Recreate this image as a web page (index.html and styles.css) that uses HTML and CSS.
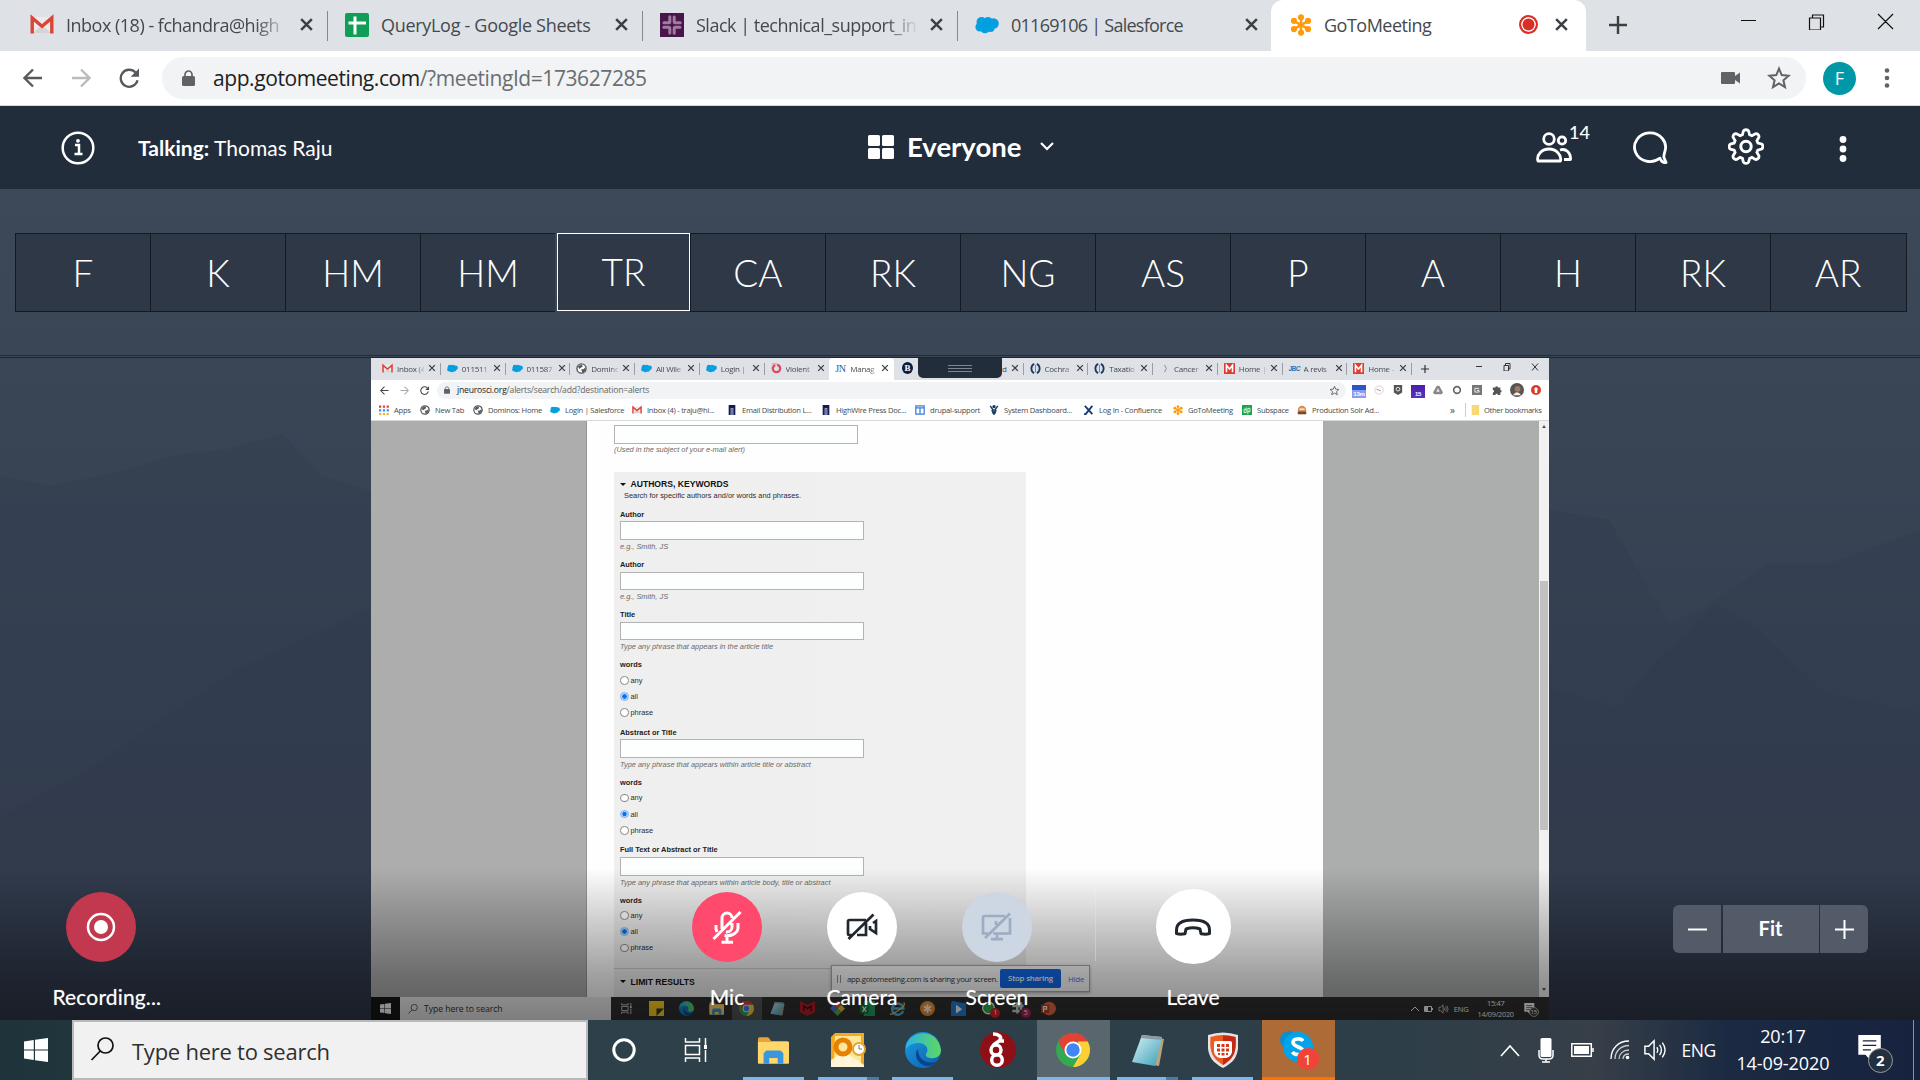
FILE: index.html
```html
<!DOCTYPE html>
<html lang="en">
<head>
<meta charset="utf-8">
<title>GoToMeeting</title>
<link rel="stylesheet" href="styles.css">
</head>
<body>
<svg class="defs" width="0" height="0">
  <defs>
    <linearGradient id="edgeA" x1="0" y1="0" x2="1" y2="1"><stop offset="0" stop-color="#1b9de2"/><stop offset="1" stop-color="#0b5cad"/></linearGradient>
    <linearGradient id="edgeB" x1="0" y1="0" x2="1" y2="0"><stop offset="0" stop-color="#29b3e6"/><stop offset="1" stop-color="#5fd85c"/></linearGradient>
    <linearGradient id="note" x1="0" y1="0" x2="1" y2="1"><stop offset="0" stop-color="#d8f3f8"/><stop offset="1" stop-color="#3b9fb5"/></linearGradient>
    <symbol id="x" viewBox="0 0 14 14"><path d="M2 2l10 10M12 2L2 12" stroke="#3c4043" stroke-width="2.300" fill="none"/></symbol>
    <symbol id="gmail" viewBox="0 0 24 18"><path d="M2 1h20v16H2z" fill="#eceaea"/><path d="M3 17l9-8 9 8z" fill="#d5d3d3"/><path d="M2.200 17.500V2L12 10.200 21.800 2v15.500" stroke="#db4437" stroke-width="3.400" fill="none"/></symbol>
    <symbol id="sheets" viewBox="0 0 24 24"><rect width="24" height="24" rx="2" fill="#109d58"/><path d="M10 3.500v18M3.500 10h17.500" stroke="#fff" stroke-width="3"/></symbol>
    <symbol id="slack" viewBox="0 0 24 24"><rect width="24" height="24" fill="#4a154b"/><g stroke="#a07ba1" stroke-width="3" stroke-linecap="round"><path d="M9.800 3.800v5.500M14.200 14.700v5.500M3.800 14.200h5.500M14.700 9.800h5.500M14.200 4v5.300M9.800 14.700V20M4 9.800h5.300M14.700 14.200H20"/></g></symbol>
    <symbol id="sf" viewBox="0 0 24 17"><g fill="#049fe0"><circle cx="6.500" cy="5.500" r="5"/><circle cx="13" cy="5" r="4.500"/><circle cx="18.500" cy="7" r="5.300"/><circle cx="5" cy="10.500" r="4.600"/><circle cx="10" cy="12" r="4.800"/><circle cx="15.500" cy="11.500" r="4"/></g></symbol>
    <symbol id="gtm" viewBox="0 0 24 24"><g stroke="#ff9a0c" fill="#ff9a0c" stroke-width="2.800"><path d="M12 3v18M4 7.500l16 9M20 7.500l-16 9"/><g stroke="none"><circle cx="12" cy="3.600" r="3.300"/><circle cx="12" cy="20.400" r="3.300"/><circle cx="4.300" cy="7.500" r="3.300"/><circle cx="19.700" cy="7.500" r="3.300"/><circle cx="4.300" cy="16.500" r="3.300"/><circle cx="19.700" cy="16.500" r="3.300"/></g></g></symbol>
    <symbol id="back" viewBox="0 0 20 20"><path d="M19 10H2M10 1.500L1.500 10l8.500 8.500" stroke="currentColor" stroke-width="2.300" fill="none"/></symbol>
    <symbol id="fwd" viewBox="0 0 20 20"><path d="M1 10h17M10 1.500l8.500 8.500-8.500 8.500" stroke="currentColor" stroke-width="2.300" fill="none"/></symbol>
    <symbol id="reload" viewBox="0 0 20 20"><path d="M18.500 12.200A8.500 8.500 0 1 1 16.500 4.500" stroke="currentColor" stroke-width="2.300" fill="none"/><path d="M20 .5v8.300h-8.300z" fill="currentColor"/></symbol>
    <symbol id="lock" viewBox="0 0 13 16"><rect y="6" width="13" height="10" rx="1.500" fill="#5f6368"/><path d="M3 7V4.500a3.500 3.500 0 0 1 7 0V7" fill="none" stroke="#5f6368" stroke-width="1.700"/></symbol>
    <symbol id="star" viewBox="0 0 24 24"><path d="M12 2.600l2.700 6.500 7 .6-5.300 4.600 1.600 6.900-6-3.700-6 3.700 1.600-6.900-5.300-4.600 7-.6z" fill="none" stroke="#5f6368" stroke-width="2"/></symbol>
    <symbol id="win" viewBox="0 0 24 24"><path d="M0 3.400L9.800 2v9.400H0zM11 1.800L24 0v11.400H11zM0 12.600h9.800V22L0 20.600zM11 12.600h13V24l-13-1.800z" fill="currentColor"/></symbol>
    <symbol id="glass" viewBox="0 0 24 24"><circle cx="15" cy="8.500" r="7.500" fill="none" stroke="currentColor" stroke-width="1.700"/><path d="M9.800 14L1 23" stroke="currentColor" stroke-width="1.700"/></symbol>
    <symbol id="taskview" viewBox="0 0 24 24"><path d="M1.500 0v4h14V0M1.500 24v-4h14v4M1.500 7.500h14v9h-14zM21.500 0v8M21.500 12v12" fill="none" stroke="currentColor" stroke-width="1.500"/><path d="M20 7h3v4h-3z" fill="currentColor"/></symbol>
    <symbol id="globe" viewBox="0 0 12 12"><circle cx="6" cy="6" r="5" fill="#fff" stroke="#55595d" stroke-width="1.500"/><path d="M2 3.500l4-2 1.500 2L5 5.500 3.500 6.500zM5.500 7l3-.5 1.500-2 .5 3L8 10.500l-1 .3L6.500 9z" fill="#55595d"/></symbol>
    <symbol id="pillar" viewBox="0 0 12 12"><path d="M2 0h8v12H7.500V3.500h-3V12H2z" fill="#141b58"/><path d="M5 4h2v8H5z" fill="#5a5f8c"/></symbol>
    <symbol id="ring" viewBox="0 0 12 12"><path d="M4.500 1C.5 3 .5 9 4.500 11M7.500 1c4 2 4 8 0 10" stroke="#1c3867" stroke-width="2" fill="none"/><path d="M6 2v8" stroke="#c33" stroke-width=".8"/></symbol>
    <symbol id="mred" viewBox="0 0 12 12"><rect width="12" height="12" fill="#e03a31"/><path d="M2.700 10V2.500L6 6.500l3.300-4V10" stroke="#fff" stroke-width="1.800" fill="none"/></symbol>
    <symbol id="folder" viewBox="0 0 34 28"><path d="M1 2a2 2 0 0 1 2-2h9l3 4h17a2 2 0 0 1 2 2v20H1z" fill="#e8a33a"/><path d="M1 5h33v22a1 1 0 0 1-1 1H2a1 1 0 0 1-1-1z" fill="#ffd76b"/><path d="M7 28V17l3-3h15l3 3v11h-6v-6h-9v6z" fill="#3a97dd"/></symbol>
    <symbol id="edge" viewBox="0 0 36 36"><circle cx="18" cy="18" r="18" fill="url(#edgeA)"/><path d="M1 14C4-1 32-6 36 18c0 6-5 9-11 8-3-.5-5-2-4-4 4-6-1-11-8-11-5 0-9 2-12 6z" fill="url(#edgeB)"/><path d="M13 17c-5 6 0 16 9 17 4 .5 8-2 10-5-8 4-19 0-19-12z" fill="#0c448c"/></symbol>
    <symbol id="chrome" viewBox="0 0 34 34"><circle cx="17" cy="17" r="17" fill="#34a853"/><path d="M2.300 8.500A17 17 0 0 1 31.700 8.500H17z" fill="#e34133"/><path d="M2.300 8.500L9.600 21.300 17 8.500z" fill="#e34133"/><path d="M31.700 8.500A17 17 0 0 1 17 34l7.400-12.800L22 8.500z" fill="#fdd035"/><circle cx="17" cy="17" r="8.500" fill="#fff"/><circle cx="17" cy="17" r="6.700" fill="#4285f4"/></symbol>
    <symbol id="notepad" viewBox="0 0 34 34"><path d="M12 3l21 3-5 27-6-1z" fill="#b9a57c"/><path d="M11 2l20 2-7 29-23-4z" fill="url(#note)"/><path d="M11 2l20 2-.8 3-20.500-2z" fill="#8d9aa0"/></symbol>
    <symbol id="shield" viewBox="0 0 30 36"><path d="M0 3q15-5 30 0c1 17 0 25-15 33C0 28-1 20 0 3z" fill="#e4e4e4"/><path d="M2.500 5q12.500-4 25 0c1 14-1 21-12.500 28C3.500 26 1.500 19 2.500 5z" fill="#ed5a24"/><path d="M15 3.500q7 0 12.500 1.500c1 14-1 21-12.500 28z" fill="#c22a14"/><path d="M8 9h14q2 0 2 2v9q-1 5-6 6h-6q-5-1-6-6v-9q0-2 2-2z" fill="#fff"/><path d="M9 12h3v3H9zM13.500 12h3v3h-3zM18 12h3v3h-3zM9 16.500h3v3H9zM13.500 16.500h3v3h-3zM18 16.500h3v3h-3zM10 21h2v2h-2zM13.500 21h3v2.500h-3zM18 21h2v2h-2z" fill="#d03a1a"/></symbol>
    <symbol id="excel" viewBox="0 0 12 12"><rect x="3" width="9" height="12" fill="#23a566"/><rect y="3" width="7" height="7" fill="#107c41"/><path d="M2 4.500l3 4M5 4.500l-3 4" stroke="#fff"/></symbol>
    <symbol id="spk" viewBox="0 0 24 24"><path d="M1 8h4l6-6v20l-6-6H1z" fill="none" stroke="currentColor" stroke-width="1.600"/><path d="M14 9q2 3 0 6M17 6.500q4 5.500 0 11M20 4q6 8 0 16" fill="none" stroke="currentColor" stroke-width="1.500"/></symbol>
    <symbol id="chat" viewBox="0 0 26 30"><path d="M0 0h25v22H14v7l-6-7H0z" fill="currentColor"/><path d="M5 6.500h15M5 11.500h15M5 16.500h9" stroke="#17233c" stroke-width="1.600"/></symbol>
  </defs>
</svg>

<div class="tabs">
  <div class="tab"><svg class="fav"><use href="#gmail"/></svg><span class="tt fade">Inbox (18) - fchandra@high</span><svg class="cx"><use href="#x"/></svg></div>
  <div class="tab"><svg class="fav"><use href="#sheets"/></svg><span class="tt wide">QueryLog - Google Sheets</span><svg class="cx"><use href="#x"/></svg></div>
  <div class="tab"><svg class="fav"><use href="#slack"/></svg><span class="tt fade">Slack | technical_support_in</span><svg class="cx"><use href="#x"/></svg></div>
  <div class="tab last"><svg class="fav"><use href="#sf"/></svg><span class="tt tight">01169106 | Salesforce</span><svg class="cx"><use href="#x"/></svg></div>
  <div class="tab active"><svg class="fav"><use href="#gtm"/></svg><span class="tt">GoToMeeting</span><i class="rec"></i><svg class="cx"><use href="#x"/></svg></div>
  <svg class="plus" viewBox="0 0 18 18"><path d="M9 0v18M0 9h18" stroke="#3c4043" stroke-width="2.400"/></svg>
  <svg class="winctl" viewBox="0 0 154 18"><g fill="none" stroke="#111" stroke-width="1.200"><path d="M1 8.500h15M69.500 6h11v12h-11zM72.500 6V3h11v12h-3M138 2l15 15M153 2l-15 15"/></g></svg>
</div>
<div class="toolbar">
  <svg class="nav"><use href="#back"/></svg><svg class="nav dim"><use href="#fwd"/></svg><svg class="nav rl"><use href="#reload"/></svg>
  <div class="pill"><svg class="lk"><use href="#lock"/></svg><span class="url">app.gotomeeting.com<b>/?meetingId=173627285</b></span>
    <svg class="cam" viewBox="0 0 19 12"><path d="M0 1a1 1 0 0 1 1-1h12a1 1 0 0 1 1 1v3l5-3.500v11L14 8v3a1 1 0 0 1-1 1H1a1 1 0 0 1-1-1z" fill="#5f6368"/></svg>
    <svg class="st"><use href="#star"/></svg></div>
  <div class="ava">F</div>
  <svg class="dots" viewBox="0 0 6 20"><g fill="#5f6368"><circle cx="3" cy="2.500" r="2.300"/><circle cx="3" cy="10" r="2.300"/><circle cx="3" cy="17.500" r="2.300"/></g></svg>
</div>

<header class="head">
  <svg class="info" viewBox="0 0 34 34"><circle cx="17" cy="17" r="15.300" fill="none" stroke="#fff" stroke-width="2.500"/><path d="M14 14h4v9M13.500 23h8" stroke="#fff" stroke-width="2.500" fill="none"/><circle cx="17" cy="9.800" r="1.900" fill="#fff"/></svg>
  <div class="talk"><strong>Talking:</strong> Thomas Raju</div>
  <div class="view"><svg width="26" height="24" viewBox="0 0 26 24"><g fill="#fff"><rect width="12" height="11" rx="1.500"/><rect x="14" width="12" height="11" rx="1.500"/><rect y="13" width="12" height="11" rx="1.500"/><rect x="14" y="13" width="12" height="11" rx="1.500"/></g></svg><span>Everyone</span><svg width="14" height="9" viewBox="0 0 14 9"><path d="M1 1l6 6 6-6" fill="none" stroke="#fff" stroke-width="2.200"/></svg></div>
  <div class="acts">
    <svg width="36" height="31" viewBox="0 0 36 31"><g fill="none" stroke="#fff" stroke-width="2.800"><circle cx="13" cy="7" r="5.300"/><circle cx="26" cy="8.500" r="3.700"/><path d="M2 29c-2-6 4-12 11-12s13 6 11.500 12zM24 18c6-2 11 3 10.500 9.500H28" stroke-linejoin="round"/></g></svg><span class="count">14</span>
    <svg width="36" height="33" viewBox="0 0 36 33"><path d="M28 27.200A15.500 14.300 0 1 1 33 20c-.7 3-1.500 5-1 6.500l2 5c-3 .3-5-1.500-6-4.300z" fill="none" stroke="#fff" stroke-width="2.800" stroke-linejoin="round"/></svg>
    <svg class="gear" width="36" height="37" viewBox="0 0 36 36"><path d="M15.400 2.500c1-1.700 4.200-1.700 5.200 0l1 3.800 2.300 1 3.500-2c2-.5 4 1.500 3.500 3.500l-2 3.400 1 2.300 3.700 1c1.700 1 1.700 4 0 5l-3.800 1.100-.9 2.300 2 3.500c.5 2-1.500 4-3.500 3.500l-3.500-2-2.300 1-1 3.700c-1 1.700-4.200 1.700-5.200 0l-1-3.800-2.300-.9-3.500 2c-2 .5-4-1.500-3.500-3.500l2-3.500-.9-2.300-3.800-1c-1.700-1-1.700-4 0-5l3.800-1.100.9-2.300-2-3.400c-.5-2 1.500-4 3.500-3.500l3.500 2 2.300-1z" fill="none" stroke="#fff" stroke-width="2.800"/><circle cx="18" cy="18" r="5.200" fill="none" stroke="#fff" stroke-width="3"/></svg>
    <svg class="more" width="8" height="26" viewBox="0 0 8 26"><g fill="#fff"><circle cx="4" cy="3.500" r="3.400"/><circle cx="4" cy="13" r="3.400"/><circle cx="4" cy="22.500" r="3.400"/></g></svg>
  </div>
</header>

<section class="people">
  <div>F</div><div>K</div><div>HM</div><div>HM</div><div class="on">TR</div><div>CA</div><div>RK</div><div>NG</div><div>AS</div><div>P</div><div>A</div><div>H</div><div>RK</div><div>AR</div>
</section>

<main class="stage">
  <svg class="hills" viewBox="0 0 1920 662" preserveAspectRatio="none"><path d="M0 118L50 128l60-12 70-20 45-4 57-16 40 42 50 16V662H0zM1549 152l60 10 60 104 40-20 60-40 60 0 91-34V662H1549z" fill="#313c4e" opacity=".35"/><path d="M0 460l90-50 150-100 131-60V662H0zM1549 330l70 20 40-50 55-55 50 30 60 60 96 20V662H1549z" fill="#2f384a" opacity=".25"/></svg>
  <div class="video">
    <div class="vtabs">
      <div><svg><use href="#gmail"/></svg><span>Inbox (4</span><svg class="vx"><use href="#x"/></svg></div>
      <div><svg><use href="#sf"/></svg><span>011511</span><svg class="vx"><use href="#x"/></svg></div>
      <div><svg><use href="#sf"/></svg><span>011587</span><svg class="vx"><use href="#x"/></svg></div>
      <div><svg><use href="#globe"/></svg><span>Domino</span><svg class="vx"><use href="#x"/></svg></div>
      <div><svg><use href="#sf"/></svg><span>All Wile</span><svg class="vx"><use href="#x"/></svg></div>
      <div><svg><use href="#sf"/></svg><span>Login | </span><svg class="vx"><use href="#x"/></svg></div>
      <div class="nb"><svg viewBox="0 0 12 12"><circle cx="6" cy="6" r="4" fill="none" stroke="#d84c62" stroke-width="2.500" stroke-dasharray="17 2"/><path d="M1 1h6" stroke="#e79aa6" stroke-width="1.500"/></svg><span>Violent</span><svg class="vx"><use href="#x"/></svg></div>
      <div class="cur"><em>JN</em><span>Manag</span><svg class="vx"><use href="#x"/></svg></div>
      <div class="nb"><u>B</u></div>
      <div><svg></svg><span class="d">d</span><svg class="vx"><use href="#x"/></svg></div>
      <div><svg><use href="#ring"/></svg><span>Cochra</span><svg class="vx"><use href="#x"/></svg></div>
      <div><svg><use href="#ring"/></svg><span>Taxatio</span><svg class="vx"><use href="#x"/></svg></div>
      <div><svg viewBox="0 0 12 12"><path d="M6 2l2 4-2 4" stroke="#888" fill="none"/></svg><span>Cancer</span><svg class="vx"><use href="#x"/></svg></div>
      <div><svg><use href="#mred"/></svg><span>Home |</span><svg class="vx"><use href="#x"/></svg></div>
      <div><em class="jbc">JBC</em><span>A revis</span><svg class="vx"><use href="#x"/></svg></div>
      <div><svg><use href="#mred"/></svg><span>Home -</span><svg class="vx"><use href="#x"/></svg></div>
      <svg class="vplus" viewBox="0 0 8 8"><path d="M4 0v8M0 4h8" stroke="#333" stroke-width="1.200"/></svg>
      <svg class="vwin" viewBox="0 0 64 8"><path d="M1 3.500h6M29 2.500h4.500V8H29zM30.500 2V.5H35V6h-1M57 .5l6 7M63 .5l-6 7" fill="none" stroke="#333"/></svg>
    </div>
    <div class="vbar">
      <svg class="vn"><use href="#back"/></svg><svg class="vn dim"><use href="#fwd"/></svg><svg class="vn"><use href="#reload"/></svg>
      <div class="vpill"><svg width="6" height="8"><use href="#lock"/></svg><span>jneurosci.org<b>/alerts/search/add?destination=alerts</b></span><svg class="vst"><use href="#star"/></svg></div>
      <div class="ext">
        <i class="e1">13m</i>
        <svg viewBox="0 0 12 12"><circle cx="6" cy="6" r="5" fill="#fff" stroke="#ccc"/><path d="M3 5l5 2" stroke="#b66"/></svg>
        <svg viewBox="0 0 12 12"><path d="M1 0h10v9l-5 3-5-3z" fill="#555"/><circle cx="6" cy="5" r="2.200" fill="none" stroke="#fff"/></svg>
        <i class="e2">15</i>
        <svg viewBox="0 0 12 12"><path d="M4.500 1h3L12 9l-1.500 2h-9L0 9z" fill="#888"/><path d="M6 4l2 4H4z" fill="#eee"/></svg>
        <svg viewBox="0 0 12 12"><circle cx="6" cy="6" r="4" fill="none" stroke="#666" stroke-width="2"/></svg>
        <svg viewBox="0 0 12 12"><rect x="0" y="0" width="12" height="12" fill="#777"/><path d="M8.500 4h-5v4.500h5V6.500H6" stroke="#fff" fill="none"/></svg>
        <svg viewBox="0 0 12 12"><path d="M1 3h3a1.500 1.500 0 1 1 3 0h3v3a1.500 1.500 0 1 1 0 3v3H7a1.500 1.500 0 0 0-3 0H1V9a1.500 1.500 0 0 0 0-3z" fill="#555"/></svg>
        <svg class="big" viewBox="0 0 12 12"><circle cx="6" cy="6" r="6" fill="#5b5552"/><circle cx="6.500" cy="5" r="2.500" fill="#a07b68"/><path d="M2.500 10.500q3.500-5 7 0" fill="#eee"/></svg>
        <svg viewBox="0 0 12 12"><circle cx="6" cy="6" r="6" fill="#dc3a24"/><path d="M6 2.500l3 3H7.500v4h-3v-4H3z" fill="#fff"/></svg>
      </div>
    </div>
    <div class="marks">
      <div style="width:41px"><svg viewBox="0 0 12 12"><g stroke-width="2.600" stroke-dasharray="2.600 2"><path d="M0 2h12" stroke="#e34133"/><path d="M0 6.500h12" stroke="#4285f4"/><path d="M0 11h12" stroke="#efb02e"/></g></svg>Apps</div>
      <div style="width:53px"><svg><use href="#globe"/></svg>New Tab</div>
      <div style="width:77px"><svg><use href="#globe"/></svg>Dominos: Home</div>
      <div style="width:82px"><svg><use href="#sf"/></svg>Login | Salesforce</div>
      <div style="width:95px"><svg><use href="#gmail"/></svg>Inbox (4) - traju@hi...</div>
      <div style="width:94px"><svg><use href="#pillar"/></svg>Email Distribution L...</div>
      <div style="width:94px"><svg><use href="#pillar"/></svg>HighWire Press Doc...</div>
      <div style="width:74px"><svg viewBox="0 0 12 12"><path d="M1 1h10v10H1zM1 3.500h10M6 3v8" fill="none" stroke="#3b7ddb" stroke-width="1.500"/></svg>drupal-support</div>
      <div style="width:95px"><svg viewBox="0 0 12 12"><circle cx="6" cy="2" r="2" fill="#173b66"/><path d="M1.500 1l3 4.500L6 6l1.500-.5 3-4.500M6 5v7M3.500 6L5 10h2l1.500-4" fill="none" stroke="#173b66" stroke-width="1.700"/></svg>System Dashboard...</div>
      <div style="width:89px"><svg viewBox="0 0 12 12"><path d="M1 1l9 10M10 1L2 11H0" fill="none" stroke="#153b73" stroke-width="2.200"/></svg>Log In - Confluence</div>
      <div style="width:69px"><svg><use href="#gtm"/></svg>GoToMeeting</div>
      <div style="width:55px"><svg viewBox="0 0 12 12"><rect width="12" height="12" fill="#1ea54c"/><path d="M5 3v6H2.500V5H5M7 11V4h2.500v4H7" fill="none" stroke="#fff"/></svg>Subspace</div>
      <div style="width:153px"><svg viewBox="0 0 12 12"><path d="M1 6a5 5 0 0 1 10 0v5H1z" fill="#d98d4e"/><path d="M1 8h10v3H1z" fill="#6d4a36"/><path d="M3 5h6" stroke="#fff" stroke-width="1.500"/></svg>Production Solr Ad...</div>
      <div class="raq">»</div>
      <div class="ob"><svg viewBox="0 0 12 12"><path d="M2 0h9v12H2z" fill="#f8d775"/></svg>Other bookmarks</div>
    </div>
    <div class="page">
      <div class="gutter"></div>
      <div class="sheet">
        <div class="inp top"></div><div class="hint first">(Used in the subject of your e-mail alert)</div>
        <div class="panel">
          <div class="ptitle">AUTHORS, KEYWORDS</div>
          <div class="pdesc">Search for specific authors and/or words and phrases.</div>
          <div class="field"><label>Author</label><div class="inp"></div><div class="hint">e.g., Smith, JS</div></div>
          <div class="field"><label>Author</label><div class="inp"></div><div class="hint">e.g., Smith, JS</div></div>
          <div class="field"><label>Title</label><div class="inp"></div><div class="hint">Type any phrase that appears in the article title</div></div>
          <div class="radios"><label>words</label><p><i></i>any</p><p><i class="c"></i>all</p><p><i></i>phrase</p></div>
          <div class="field"><label>Abstract or Title</label><div class="inp"></div><div class="hint">Type any phrase that appears within article title or abstract</div></div>
          <div class="radios"><label>words</label><p><i></i>any</p><p><i class="c"></i>all</p><p><i></i>phrase</p></div>
          <div class="field"><label>Full Text or Abstract or Title</label><div class="inp"></div><div class="hint">Type any phrase that appears within article body, title or abstract</div></div>
          <div class="radios"><label>words</label><p><i></i>any</p><p><i class="c"></i>all</p><p><i></i>phrase</p></div>
          <div class="ptitle limit">LIMIT RESULTS</div>
        </div>
      </div>
      <div class="gutter r"></div>
      <div class="scroll"><i class="up"></i><div class="thumb"></div><i class="dn"></i></div>
    </div>
    <div class="vtask">
      <div class="vstart"><svg width="11" height="11"><use href="#win"/></svg></div>
      <div class="vsearch"><svg width="10" height="10"><use href="#glass"/></svg>Type here to search</div>
      <div class="vicons">
        <span><svg class="w"><use href="#taskview"/></svg></span>
        <span><svg viewBox="0 0 12 12"><path d="M0 0h12v12H0z" fill="#ffd21f"/><path d="M6 12V6h6z" fill="#333"/></svg></span>
        <span><svg><use href="#edge"/></svg></span><span><svg><use href="#folder"/></svg></span>
        <span class="lit"><svg><use href="#chrome"/></svg></span><span><svg><use href="#notepad"/></svg></span>
        <span><svg viewBox="0 0 12 12"><path d="M0 0l6 3 6-3v9l-6 3-6-3z" fill="#b3202c"/><path d="M3 8V4l3 2 3-2v4" stroke="#400" fill="none"/></svg></span>
        <span><svg viewBox="0 0 12 12"><path d="M6 0l3 3-3 3-3-3z" fill="#e05a45"/><path d="M9 3l3 3-3 3-3-3z" fill="#e8c23d"/><path d="M3 3l3 3-3 3-3-3z" fill="#5577c9"/><path d="M6 6l3 3-3 3-3-3z" fill="#5cab52"/></svg></span>
        <span><svg><use href="#excel"/></svg></span>
        <span><svg viewBox="0 0 12 12"><path d="M10.500 8A4.500 4.500 0 1 1 10.700 6H3" fill="none" stroke="#45b5ec" stroke-width="2"/><path d="M1 10Q-1 12 6 8T11 1" fill="none" stroke="#f5c538"/></svg></span>
        <span><svg viewBox="0 0 24 24"><circle cx="12" cy="12" r="12" fill="#f2932e"/><path d="M12 5v14M6 8.500l12 7M18 8.500l-12 7" stroke="#fff" stroke-width="3"/></svg></span>
        <span><svg viewBox="0 0 12 12"><path d="M1 0l11 2v10H0V2z" fill="#2182d8"/><path d="M4 3l5 3.500L4 10z" fill="#fff"/></svg></span>
        <span><svg viewBox="0 0 12 12"><circle cx="6" cy="5.500" r="4.700" fill="#2fb14c" stroke="#fff"/></svg><q>1</q></span>
        <span><svg viewBox="0 0 12 12"><path d="M5 1v9M1 4h9M8 1v6M1 8h6" stroke="#c8d5d8" stroke-width="2"/></svg><q class="pk">5</q></span>
        <span><svg viewBox="0 0 12 12"><circle cx="6.500" cy="6" r="5.500" fill="#e66b45"/><rect y="3" width="6.500" height="6.500" fill="#c43e1c"/><path d="M2 9V4.500h2.500v2H2" stroke="#fff" fill="none"/></svg></span>
      </div>
      <div class="vtray"><svg width="8" height="6" viewBox="0 0 8 6"><path d="M0 5l4-4 4 4" stroke="#fff" fill="none"/></svg><svg width="9" height="6" viewBox="0 0 9 6"><path d="M.5.5h7v5h-7zM8.500 2v2" stroke="#fff" fill="none"/><path d="M1 1h3v4H1z" fill="#fff"/></svg><svg width="11" height="10"><use href="#spk"/></svg><span>ENG</span><div>15:47<br>14/09/2020</div><div class="vc"><svg width="11" height="12"><use href="#chat"/></svg><q>15</q></div></div>
    </div>
    <div class="share"><i></i><span>app.gotomeeting.com is sharing your screen.</span><b>Stop sharing</b><a>Hide</a></div>
    <div class="drawer"><svg width="24" height="7" viewBox="0 0 24 7"><path d="M0 .5h24M0 3.500h24M0 6.500h24" stroke="#7c8795"/></svg></div>
  </div>
  <div class="overlay">
    <div class="ctl record"><div class="disc"><svg width="30" height="30" viewBox="0 0 30 30"><circle cx="15" cy="15" r="13" fill="none" stroke="#fff" stroke-width="2.500"/><circle cx="15" cy="15" r="7" fill="#fff"/></svg></div><span>Recording...</span></div>
    <div class="ctl mic"><div class="disc"><svg width="30" height="34" viewBox="0 0 30 34"><g fill="none" stroke="#fff" stroke-width="3"><path d="M10 19V8a5 5 0 0 1 10 0M20 13v4a5 5 0 0 1-5 5l-1-.2M4 15v4l1 3M26 13v5a11 8 0 0 1-13.500 7.500M15 26v6M9.500 32.300h11.500M1.500 29L28.500 2"/></g></svg></div><span>Mic</span></div>
    <div class="ctl camr"><div class="disc"><svg width="32" height="28" viewBox="0 0 32 28"><g fill="none" stroke="#21272f" stroke-width="2.700"><path d="M20 7H3.500a1.500 1.500 0 0 0-1.500 1.500V21a1 1 0 0 0 1 1h3M11 22h9V10M24 13v3l6 4V8l-3 2M2.500 26L27.500 1.500"/></g></svg></div><span>Camera</span></div>
    <div class="ctl scr"><div class="disc"><svg width="32" height="30" viewBox="0 0 32 30"><g fill="none" stroke="#9dacc2" stroke-width="2.700"><path d="M24 4H4a2 2 0 0 0-2 2v15.500h5M29 6v15.500H12M16 22v4M10 27.200h12M4 26L29 1.500M15 9v4"/></g></svg></div><span>Screen</span></div>
    <div class="sep"></div>
    <div class="ctl leave"><div class="disc"><svg width="38" height="20" viewBox="0 0 38 20"><path d="M2.500 13c0-7 6-10 16.500-10s16.500 3 16.500 10v3.500c-3 1-5.500.8-8.500.2L26 12c-4-1.500-10-1.500-14 0l-1 4.700c-3 .6-5.500.8-8.500-.2z" fill="none" stroke="#21272f" stroke-width="3" stroke-linejoin="round"/></svg></div><span>Leave</span></div>
    <div class="zoom"><div><svg width="19" height="19" viewBox="0 0 19 19"><path d="M0 9.500h19" stroke="#fff" stroke-width="2"/></svg></div><div class="fit">Fit</div><div><svg width="19" height="19" viewBox="0 0 19 19"><path d="M0 9.500h19M9.500 0v19" stroke="#fff" stroke-width="2"/></svg></div></div>
  </div>
</main>

<footer class="task">
  <div class="start"><svg width="24" height="24"><use href="#win"/></svg></div>
  <div class="search"><svg width="25" height="24"><use href="#glass"/></svg>Type here to search</div>
  <div class="cell"><svg width="24" height="24" viewBox="0 0 24 24"><circle cx="12" cy="12" r="10.200" fill="none" stroke="#fff" stroke-width="3"/></svg></div>
  <div class="cell"><svg class="tv" width="24" height="24"><use href="#taskview"/></svg></div>
  <div class="cell run"><svg class="fold" width="32" height="27"><use href="#folder"/></svg></div>
  <div class="cell run two"><svg width="35" height="34" viewBox="0 0 35 34"><path d="M4 0h29v34H0V4z" fill="#f8a81c"/><path d="M4 3h26v28H3z" fill="#ffe79a"/><path d="M0 27l14-8 19 13v2H0z" fill="#fff6d8"/><circle cx="12" cy="14" r="7" fill="none" stroke="#e58000" stroke-width="5"/><circle cx="28" cy="16" r="6" fill="#fff" stroke="#e8a330" stroke-width="2"/><path d="M28 12v4h3" stroke="#777" fill="none"/></svg></div>
  <div class="cell run"><svg width="36" height="36"><use href="#edge"/></svg></div>
  <div class="cell"><svg width="36" height="36" viewBox="0 0 36 36"><circle cx="18" cy="18" r="18" fill="#8e1016"/><g fill="none" stroke="#fff" stroke-width="3.500"><circle cx="16" cy="18" r="5"/><circle cx="17" cy="28" r="5.300"/><path d="M13 2c6 0 9 3 7 6s-6 3-7 6M18 9h6"/></g></svg></div>
  <div class="cell run full"><svg width="34" height="34"><use href="#chrome"/></svg></div>
  <div class="cell run two"><svg width="34" height="34"><use href="#notepad"/></svg></div>
  <div class="cell run"><svg width="30" height="36"><use href="#shield"/></svg></div>
  <div class="cell sky"><svg width="38" height="38" viewBox="0 0 38 38"><circle cx="10" cy="10" r="9" fill="#0a8fd0"/><circle cx="19" cy="17" r="15" fill="#00a4ea"/><path d="M24 11c-2-3-10-3-10 1.500S24 17 24 21s-8 5-10.500 1" fill="none" stroke="#fff" stroke-width="3.600"/></svg><q>1</q></div>
  <div class="tray">
    <svg width="20" height="13" viewBox="0 0 20 13"><path d="M1 12l9-10 9 10" stroke="#fff" stroke-width="1.600" fill="none"/></svg>
    <svg class="t1" width="16" height="25" viewBox="0 0 16 25"><rect x="2.500" width="11" height="19" rx="1.500" fill="#fff"/><path d="M1 12v5q0 4 4 4h6q4 0 4-4v-5M8 21v3M4 24h8" stroke="#fff" fill="none" stroke-width="1.500"/></svg>
    <svg class="t2" width="23" height="14" viewBox="0 0 23 14"><path d="M.8.800h19.500v12.400H.8zM22 5v4" stroke="#fff" stroke-width="1.500" fill="none"/><path d="M3 3h15v8H3z" fill="#fff"/></svg>
    <svg class="t3" width="20" height="20" viewBox="0 0 20 20"><g fill="none" stroke="#fff" stroke-width="1.300"><path d="M1 19C1 9 8 1 19 1"/><path d="M5 19C5 11 11 5.500 19 5.500M9 19c0-5 4-9 10-9M13 19c0-3 2-5 6-5" opacity=".75"/></g><circle cx="17.500" cy="17.500" r="1.800" fill="#fff"/></svg>
    <svg class="t4" width="24" height="22"><use href="#spk"/></svg>
    <span class="eng">ENG</span>
    <div class="clock">20:17<br>14-09-2020</div>
    <div class="notif"><svg width="26" height="27"><use href="#chat"/></svg><q>2</q></div>
    <i class="peek"></i>
  </div>
</footer>
</body>
</html>
```
FILE: styles.css
```css
* { box-sizing: border-box; }
body { margin: 0; width: 1920px; height: 1080px; overflow: hidden; display: flex; flex-direction: column; font-family: "Open Sans", "Noto Sans", sans-serif; background: #3a4657; }
svg { flex: none; display: block; }
.defs { position: absolute; }
q { quotes: none; }
q::before, q::after { content: none; }

/* browser tabs */
.tabs { height: 51px; background: #dee1e6; display: flex; padding-left: 13px; }
.tab { width: 315px; height: 51px; display: flex; align-items: center; padding: 0 16px 2px 17px; position: relative; flex: none; }
.tab::after { content: ""; position: absolute; right: 0; top: 11px; height: 30px; width: 1.500px; background: #85898e; }
.tab.last::after, .tab.active::after { display: none; }
.fav { width: 24px; height: 24px; margin-right: 12px; }
.tt { width: 223px; font-size: 18px; letter-spacing: -0.5px; color: #45494d; white-space: nowrap; flex: none; }
.tt.wide { letter-spacing: -0.3px; }
.tt.tight { letter-spacing: -0.75px; }
.fade { -webkit-mask-image: linear-gradient(90deg, #000 85%, transparent 100%); mask-image: linear-gradient(90deg, #000 85%, transparent 100%); }
.cx { width: 15px; height: 15px; margin-left: 9.500px; }
.tab.active { background: #fff; border-radius: 12px 12px 0 0; margin-left: -2px; width: 315px; }
.tab.active .fav { margin-left: 2px; width: 22px; height: 22px; }
.tab.active .tt { width: 195px; }
.rec { width: 19px; height: 19px; border-radius: 50%; border: 2px solid #d93025; background: #d93025; box-shadow: inset 0 0 0 1.500px #fff; margin-right: 6px; flex: none; }
.plus { width: 18px; height: 18px; margin: 16px 0 0 23px; }
.winctl { width: 154px; height: 18px; margin: 12px 0 0 113px; }

/* address bar */
.toolbar { height: 55px; background: #fff; border-bottom: 1.500px solid #d4d7db; display: flex; align-items: center; padding-left: 23px; color: #55595e; }
.nav { width: 20px; height: 20px; margin-right: 28px; }
.nav.rl { margin-right: 23px; width: 20px; }
.dim { color: #b9bbbe; }
.pill { width: 1644px; height: 42px; border-radius: 21px; background: #f1f3f4; display: flex; align-items: center; padding-left: 20px; flex: none; }
.lk { width: 13px; height: 16px; margin-right: 18px; }
.url { font-size: 21px; letter-spacing: -0.42px; color: #202124; width: 1508px; }
.url b { font-weight: 400; color: #6a6e72; }
.cam { width: 19px; height: 12px; margin-right: 27px; }
.st { width: 24px; height: 24px; }
.ava { width: 33px; height: 33px; border-radius: 50%; background: #0097a7; color: #fff; font-size: 18px; display: grid; place-items: center; margin: 0 28px 0 17px; }
.dots { width: 6px; height: 20px; }

/* meeting header */
.head { height: 83px; background: #222d3c; display: flex; align-items: center; padding-left: 61px; color: #fff; font-family: Lato, sans-serif; }
.info { width: 34px; height: 34px; margin-right: 43px; }
.talk { width: 730px; font-size: 21px; letter-spacing: 0.02px; }
.view { width: 668px; display: flex; align-items: center; font-weight: 700; font-size: 27.500px; margin-top: -2px; }
.view span { margin: 0 19px 0 13px; }
.acts { display: flex; align-items: center; }
.count { font-size: 18px; font-weight: 500; margin: -31px 42px 0 -3px; width: 21px; }
.gear { margin-left: 60px; margin-top: -2px; }
.more { margin-left: 75px; margin-top: 2px; }

/* participant strip */
.people { height: 169px; padding: 44px 0 0 15px; display: flex; font-family: Lato, sans-serif; font-weight: 300; font-size: 37px; color: #fff; background: linear-gradient(#3d4859, #3a4556); border-bottom: 1.500px solid #1d2531; position: relative; }
.people::after { content: ""; position: absolute; left: 0; right: 0; bottom: 1px; height: 1px; background: #1d2531; opacity: .8; }
.people div { width: 135px; flex: none; height: 79px; padding-bottom: 1px; display: grid; place-items: center; background: #2f3847; border: 1px solid #141a24; border-left-width: 1.500px; border-right-width: 0; }
.people div:last-child { width: 137px; padding-right: 1px; border-right-width: 1px; }
.people div.on { border: 1.500px solid #fff; margin: 0 0 0 2px; width: 133px; height: 78px; }

/* stage */
.stage { height: 662px; position: relative; background: linear-gradient(#3a4556, #354052 45%, #323a4b); display: flex; padding-left: 371px; flex: none; }
.hills { position: absolute; inset: 0; width: 1920px; height: 662px; }
.video { width: 1178px; height: 662px; position: relative; background: #fff; display: flex; flex-direction: column; font-size: 8px; letter-spacing: -0.25px; color: #45494e; }
.vtabs { height: 21.500px; background: #dee1e6; display: flex; padding-left: 5px; align-items: center; flex: none; }
.vtabs > div { width: 64.750px; height: 21.500px; display: flex; align-items: center; padding: 0 0 1px 6px; position: relative; flex: none; }
.vtabs > div::after { content: ""; position: absolute; right: 0; top: 5px; height: 12px; width: 1px; background: #9a9ea3; }
.vtabs > div.nb::after, .vtabs > div.cur::after { display: none; }
.vtabs > div.cur { background: #fff; border-radius: 4px 4px 0 0; }
.vtabs > div svg { width: 11px; height: 11px; }
.vtabs span { width: 27px; margin: 0 4px 0 4px; white-space: nowrap; -webkit-mask-image: linear-gradient(90deg, #000 70%, rgba(0,0,0,.2)); mask-image: linear-gradient(90deg, #000 70%, rgba(0,0,0,.2)); }
.vtabs span.d { text-align: right; -webkit-mask-image: none; mask-image: none; }
.vtabs > div svg.vx { width: 8px; height: 8px; }
.vtabs em { font: 10px "Liberation Serif", serif; color: #1f5a95; width: 11px; letter-spacing: -0.5px; }
.vtabs em.jbc { font: italic bold 6.500px "Liberation Sans", sans-serif; color: #2376b9; }
.vtabs u { width: 11px; height: 12px; border-radius: 50%; background: #0b1d3f; color: #fff; font: bold 9px/12px "Liberation Serif", serif; text-align: center; text-decoration: none; margin-left: 2px; }
.vtabs .vplus { width: 8px; height: 8px; margin-left: 9px; }
.vwin { width: 64px; height: 8px; margin-left: 46px; margin-top: -3px; }
.vbar { height: 21px; display: flex; align-items: center; padding-left: 9px; flex: none; color: #444; }
.vn { width: 9px; height: 9px; margin-right: 11px; }
.vbar .dim { color: #aaa; }
.vpill { width: 909px; height: 17px; border-radius: 9px; background: #f1f3f4; display: flex; align-items: center; padding-left: 7px; margin-left: -3px; font-size: 8.600px; letter-spacing: -0.2px; color: #222; flex: none; }
.vpill span { margin-left: 7px; width: 872px; }
.vpill b { font-weight: 400; color: #666; }
.vst { width: 11px; height: 11px; }
.ext { display: flex; align-items: center; margin-left: 8px; }
.ext > * { width: 10px; height: 10px; margin-right: 9.700px; flex: none; }
.ext .big { width: 14px; height: 14px; margin: 0 7.700px 0 -2px; }
.ext i { font: bold 6px/7px "Liberation Sans", sans-serif; color: #fff; text-align: center; background: linear-gradient(#2a56c6 40%, #8b9cf0 40%); width: 14px; height: 13px; padding-top: 6px; margin: 3px 7.700px 0 -2px; }
.ext i.e2 { background: linear-gradient(#4c1fa8, #5b2fc0); }
.marks { height: 20.500px; display: flex; align-items: center; padding: 0 0 1px 8px; font-size: 7.600px; letter-spacing: -0.25px; white-space: nowrap; border-bottom: 1px solid #d7dadd; flex: none; }
.marks > div { display: flex; align-items: center; flex: none; }
.marks svg { width: 10px; height: 10px; margin-right: 5px; }
.marks .raq { font-size: 10px; width: 16px; border-right: 1px solid #ccc; margin-right: 4px; }
.marks .ob { letter-spacing: -0.32px; }
.marks .ob svg { margin-right: 4px; }
.page { height: 576px; display: flex; flex: none; font-family: "Liberation Sans", sans-serif; font-size: 7.400px; letter-spacing: 0; }
.gutter { width: 216px; background: #adadad; border-right: 1.500px solid #949494; }
.gutter.r { border: 0; background: #acaeae; }
.sheet { width: 736px; padding: 4px 0 0 27px; background: #fefefe; }
.inp { width: 244px; height: 18.500px; background: #fdfefe; border: 1px solid #b3b3b3; }
.hint { font-style: italic; color: #6a6a6a; height: 13px; line-height: 13px; white-space: nowrap; }
.first { height: 28px; line-height: 12px; }
.panel { width: 412px; height: 525px; background: linear-gradient(90deg, #efefef, #f0f0f0); padding: 6px 0 0 6px; color: #2c2c2c; }
.ptitle { font-weight: 700; font-size: 8.600px; line-height: 12px; color: #111; padding-left: 10.500px; position: relative; }
.ptitle::before { content: ""; position: absolute; left: 0; top: 5px; border: 3px solid transparent; border-top-color: #111; }
.pdesc { padding-left: 4px; height: 18px; line-height: 12px; }
.field { height: 50.300px; }
label { display: block; font-weight: 700; color: #222; height: 13.800px; line-height: 13px; }
.radios { height: 67.300px; }
.radios p { margin: 0; height: 16.200px; display: flex; align-items: center; gap: 2px; }
.radios i { width: 8.500px; height: 8.500px; border-radius: 50%; border: 1px solid #888; background: #fff; }
.radios i.c { border-color: #8ab9f0; background: radial-gradient(circle, #0872f0 40%, #a9d2fb 50%); }
.limit { margin: 7px 0 0 -6px; padding: 7px 0 0 16.500px; border-top: 1px solid #ccc; }
.limit::before { left: 6px; top: 11px; }
.scroll { width: 10px; background: #f1f1f1; display: flex; flex-direction: column; align-items: center; }
.up, .dn { border: 2px solid transparent; border-bottom: 3px solid #555; margin-top: 2px; }
.dn { border-bottom: 2px solid transparent; border-top: 3px solid #555; margin-top: 158px; }
.thumb { width: 8px; height: 249px; background: #c1c1c1; margin-top: 153px; }
.vtask { height: 23px; background: #2f2f2f; display: flex; align-items: center; flex: none; color: #fff; }
.vstart { width: 29px; height: 23px; background: #171717; display: grid; place-items: center; }
.vsearch { width: 211px; height: 23px; background: #f0f0f0; color: #333; display: flex; align-items: center; gap: 6px; padding-left: 8px; font-size: 8.600px; letter-spacing: -0.03px; }
.vicons { display: flex; }
.vicons span { width: 30.200px; height: 23px; display: grid; place-items: center; position: relative; }
.vicons .lit { background: #555; }
.vicons svg { width: 15px; height: 15px; }
.vicons svg.w { width: 11px; height: 11px; }
.vicons q { position: absolute; right: 3px; bottom: 2px; width: 10px; height: 10px; border-radius: 50%; background: #e8222a; font: 7px/10px "Open Sans", sans-serif; text-align: center; }
.vicons q.pk { background: #c21c5b; }
.vtray { margin-left: 347px; display: flex; align-items: center; gap: 5px; font-size: 7.600px; }
.vtray div { text-align: center; line-height: 11px; font-size: 7.300px; margin: 0 5px 0 4px; }
.vtray .vc { position: relative; margin: 0; }
.vtray q { position: absolute; left: 5px; top: 4px; width: 10px; height: 10px; border-radius: 50%; background: #444; border: .5px solid #aaa; font-size: 6px; line-height: 9px; }
.share { position: absolute; left: 460px; top: 607px; width: 259px; height: 27px; background: #fff; border: 1px solid #aaa; display: flex; align-items: center; font-size: 7.800px; letter-spacing: -0.18px; white-space: nowrap; color: #333; box-shadow: 0 1px 3px rgba(0,0,0,.3); }
.share > * { flex: none; }
.share i { width: 4px; height: 8px; border: solid #999; border-width: 0 1px; margin: 0 6px 0 5px; }
.share span { width: 153px; letter-spacing: -0.29px; }
.share b { width: 61px; height: 19px; background: #1268e8; color: #fff; border-radius: 2px; text-align: center; line-height: 18px; font-weight: 600; }
.share a { color: #3b78dc; margin-left: 7px; }
.drawer { position: absolute; left: 547px; top: 0; width: 84px; height: 20px; background: #222d3c; border-radius: 0 0 5px 5px; display: grid; place-items: center; }

/* call controls */
.overlay { position: absolute; left: 0; right: 0; bottom: 0; height: 160px; background: linear-gradient(rgba(0,0,0,0) 5%, rgba(0,0,0,.2) 40%, rgba(0,0,0,.37) 72%, rgba(0,0,0,.48)); display: flex; align-items: flex-start; padding: 32px 52px 0 41px; color: #fff; font: 21px Lato, sans-serif; }
.ctl { width: 135px; display: flex; flex-direction: column; align-items: center; }
.ctl span { margin-top: 20.500px; letter-spacing: 0.05px; line-height: 27px; text-shadow: 0 0 1px rgba(255,255,255,.5); }
.disc { width: 70px; height: 70px; border-radius: 50%; background: #fff; display: grid; place-items: center; }
.record { width: 130px; align-items: flex-start; }
.record .disc { background: #c2384f; margin-left: 25px; }
.record span { margin-left: 11.500px; letter-spacing: 0.15px; }
.mic { margin-left: 488.500px; }
.mic .disc { background: #ff4a6e; }
.scr .disc { background: #ccd7e3; }
.sep { width: 1.500px; height: 73px; background: linear-gradient(rgba(255,255,255,.1), rgba(255,255,255,.3)); margin: -4px 0 0 30px; }
.leave { margin: -3px 0 0 29.500px; }
.leave .disc { width: 75px; height: 75px; }
.leave span { margin-top: 18.500px; }
.zoom { display: flex; gap: 1.500px; margin: 13px 0 0 auto; height: 48px; }
.zoom div { width: 48px; background: #535b68; display: grid; place-items: center; border-radius: 6px 0 0 6px; }
.zoom div.fit { width: 96px; font-weight: 700; font-size: 20px; border-radius: 0; padding-bottom: 2px; }
.zoom div:last-child { border-radius: 0 6px 6px 0; }

/* taskbar */
.task { height: 60px; display: flex; color: #fff; background: linear-gradient(90deg, #1f343a 0, #2e414a 32%, #2d3e48 72%, #373f48 83%, #1b2a42 90%, #17223f 100%); flex: none; }
.start { width: 72px; display: grid; place-items: center; }
.search { width: 516px; background: #f1f1f1; border: 2px solid #b9babb; display: flex; align-items: center; gap: 17px; padding: 2px 0 0 16px; color: #2f2f2f; font-size: 22px; letter-spacing: -0.25px; }
.search svg { color: #111; margin-top: -5px; }
.cell { width: 73px; margin-right: 1.850px; display: grid; place-items: center; position: relative; flex: none; }
.cell svg { grid-area: 1/1; margin-left: -1px; }
.cell svg.tv { margin-left: -6px; }
.cell svg.fold { margin-left: -3px; }
.run::after { content: ""; position: absolute; left: 5px; right: 7px; bottom: 0; height: 3px; background: #76b9ed; }
.two::after { background: linear-gradient(90deg, #76b9ed 80%, #4a7ba2 80%); }
.full { background: #59666e; }
.full::after { left: 0; right: 0; }
.sky { background: #ad6b37; border-bottom: 3px solid #ff7200; }
.cell q { position: absolute; left: 35px; top: 28px; width: 22px; height: 22px; border-radius: 50%; background: #f0443b; font-size: 15px; line-height: 22px; text-align: center; }
.tray { flex: 1; display: flex; align-items: center; padding-left: 164px; }
.t1 { margin-left: 17.500px; }
.t2 { margin-left: 17px; }
.t3 { margin-left: 16px; }
.t4 { margin-left: 13px; }
.eng { font-size: 17.500px; margin-left: 14.500px; letter-spacing: -0.4px; }
.clock { width: 110px; margin-left: 12px; text-align: center; font-size: 18px; line-height: 27.500px; letter-spacing: -0.1px; white-space: nowrap; }
.notif { position: relative; margin: -4px 0 0 19px; }
.notif q { position: absolute; left: 11px; top: 13px; width: 25px; height: 25px; border-radius: 50%; border: 1px solid #999; background: #23303f; font: bold 15px/22px "Open Sans", sans-serif; text-align: center; }
.peek { width: 1.500px; height: 60px; background: #8a93a0; margin-left: auto; margin-right: 6px; }
```
